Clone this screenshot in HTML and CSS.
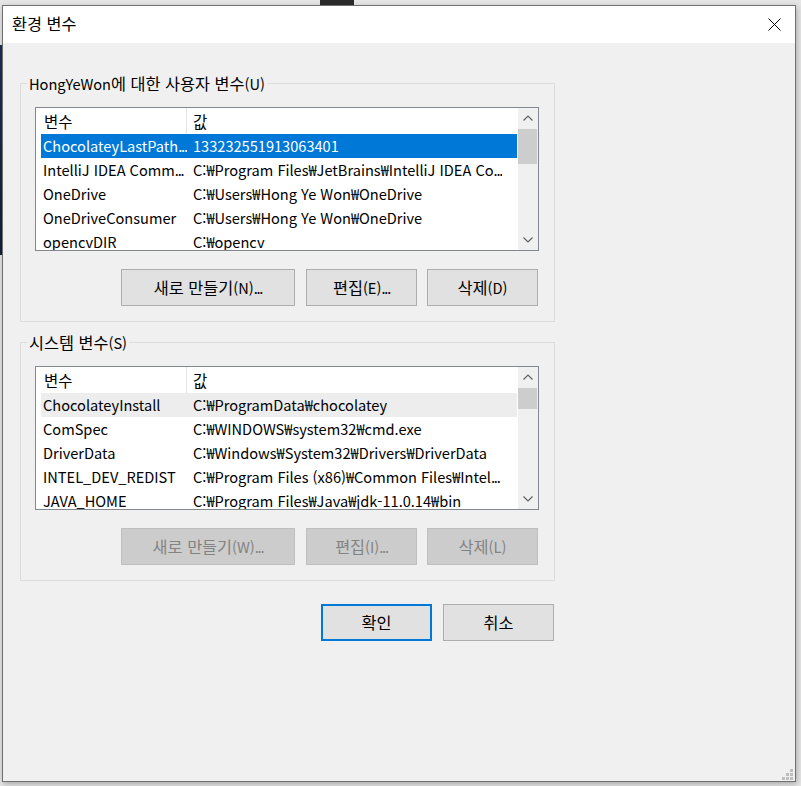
FILE: index.html
```html
<!DOCTYPE html>
<html lang="ko">
<head>
<meta charset="utf-8">
<title>환경 변수</title>
<link rel="stylesheet" href="styles.css">
</head>
<body>
<div class="desk-mark"></div>
<div class="window">
  <div class="titlebar">
    <span class="title"><span class="k">환경 변수</span></span>
    <svg class="close" width="13" height="13" viewBox="0 0 13 13"><path d="M0.5 0.5 L12.5 12.5 M12.5 0.5 L0.5 12.5" stroke="#000" stroke-width="1" fill="none"/></svg>
  </div>
  <div class="content">
    <fieldset class="group">
      <legend>HongYeWon<span class="k">에 대한 사용자 변수</span>(U)</legend>
      <div class="group-inner">
        <div class="list">
          <div class="list-body">
            <div class="header"><span class="hcol1"><span class="k">변수</span></span><span class="hcol2"><span class="k">값</span></span></div>
            <div class="row selected"><span class="col1">ChocolateyLastPath<span class="ell">...</span></span><span class="col2">133232551913063401</span></div>
            <div class="row"><span class="col1">IntelliJ IDEA Comm<span class="ell">...</span></span><span class="col2">C:₩Program Files₩JetBrains₩IntelliJ IDEA Co<span class="ell">...</span></span></div>
            <div class="row"><span class="col1">OneDrive</span><span class="col2">C:₩Users₩Hong Ye Won₩OneDrive</span></div>
            <div class="row"><span class="col1">OneDriveConsumer</span><span class="col2">C:₩Users₩Hong Ye Won₩OneDrive</span></div>
            <div class="row"><span class="col1">opencvDIR</span><span class="col2">C:₩opencv</span></div>
          </div>
          <div class="scrollbar">
            <div class="arrow"><svg width="10" height="6" viewBox="0 0 10 6"><polyline points="0.5,5.5 5,1 9.5,5.5" fill="none" stroke="#606060" stroke-width="1.2"/></svg></div>
            <div class="track"><div class="thumb thumb-user"></div></div>
            <div class="arrow"><svg width="10" height="6" viewBox="0 0 10 6"><polyline points="0.5,0.5 5,5 9.5,0.5" fill="none" stroke="#606060" stroke-width="1.2"/></svg></div>
          </div>
        </div>
        <div class="buttons">
          <button class="btn wide"><span class="k">새로 만들기</span>(N)<span class="ell">...</span></button>
          <button class="btn"><span class="k">편집</span>(E)<span class="ell">...</span></button>
          <button class="btn"><span class="k">삭제</span>(D)</button>
        </div>
      </div>
    </fieldset>

    <fieldset class="group system">
      <legend><span class="k">시스템 변수</span>(S)</legend>
      <div class="group-inner">
        <div class="list">
          <div class="list-body">
            <div class="header"><span class="hcol1"><span class="k">변수</span></span><span class="hcol2"><span class="k">값</span></span></div>
            <div class="row hover"><span class="col1">ChocolateyInstall</span><span class="col2">C:₩ProgramData₩chocolatey</span></div>
            <div class="row"><span class="col1">ComSpec</span><span class="col2">C:₩WINDOWS₩system32₩cmd.exe</span></div>
            <div class="row"><span class="col1">DriverData</span><span class="col2">C:₩Windows₩System32₩Drivers₩DriverData</span></div>
            <div class="row"><span class="col1">INTEL_DEV_REDIST</span><span class="col2">C:₩Program Files (x86)₩Common Files₩Intel<span class="ell">...</span></span></div>
            <div class="row"><span class="col1">JAVA_HOME</span><span class="col2">C:₩Program Files₩Java₩jdk-11.0.14₩bin</span></div>
          </div>
          <div class="scrollbar">
            <div class="arrow"><svg width="10" height="6" viewBox="0 0 10 6"><polyline points="0.5,5.5 5,1 9.5,5.5" fill="none" stroke="#606060" stroke-width="1.2"/></svg></div>
            <div class="track"><div class="thumb thumb-system"></div></div>
            <div class="arrow"><svg width="10" height="6" viewBox="0 0 10 6"><polyline points="0.5,0.5 5,5 9.5,0.5" fill="none" stroke="#606060" stroke-width="1.2"/></svg></div>
          </div>
        </div>
        <div class="buttons">
          <button class="btn wide" disabled><span class="k">새로 만들기</span>(W)<span class="ell">...</span></button>
          <button class="btn" disabled><span class="k">편집</span>(I)<span class="ell">...</span></button>
          <button class="btn" disabled><span class="k">삭제</span>(L)</button>
        </div>
      </div>
    </fieldset>

    <div class="dialog-buttons">
      <button class="btn default"><span class="k">확인</span></button>
      <button class="btn"><span class="k">취소</span></button>
    </div>
  </div>
  <div class="grip">
    <span class="g1"></span>
    <span class="g2"></span><span class="g3"></span>
    <span class="g4"></span><span class="g5"></span><span class="g6"></span>
  </div>
</div>
</body>
</html>
```

FILE: styles.css
```css
html, body {
  margin: 0;
  padding: 0;
}

body {
  width: 801px;
  height: 786px;
  overflow: hidden;
  position: relative;
  background:
    linear-gradient(#1d2f52, #12203c) 0 45px / 2px 210px no-repeat,
    #e6e6e6;
  font-family: "Noto Sans CJK KR", "Noto Sans", sans-serif;
  font-size: 14.6px;
  color: #000;
}

.k {
  font-size: 16.3px;
}

.ell {
  letter-spacing: -1.2px;
}

.desk-mark {
  position: absolute;
  left: 320px;
  top: 0;
  width: 34px;
  height: 5px;
  background: #2b2b2b;
}

.window {
  position: relative;
  box-sizing: border-box;
  margin: 5px 0 0 2px;
  width: 794px;
  height: 777px;
  border: 1px solid #6f6f6f;
  background: #f0f0f0;
  box-shadow: 1px 2px 6px rgba(0, 0, 0, 0.28);
}

.titlebar {
  height: 37px;
  background: #fff;
  display: flex;
  align-items: center;
  justify-content: space-between;
  padding: 0 14px 2px 9px;
  box-sizing: border-box;
}

.title {
  line-height: 20px;
}

.close {
  display: block;
  margin-top: 2px;
}

.content {
  width: 535px;
  padding: 30px 0 0 17px;
}

.group {
  box-sizing: border-box;
  width: 535px;
  margin: 0;
  padding: 0;
  border: 1px solid #dcdcdc;
  min-width: 0;
}

.group.system {
  margin-top: 10px;
}

.group legend {
  margin-left: 6px;
  padding: 0 2px;
  height: 20px;
  line-height: 20px;
}

.group-inner {
  padding: 14px 15px 15px 14px;
}

.list {
  display: flex;
  box-sizing: border-box;
  height: 144px;
  border: 1px solid #828790;
  background: #fff;
  overflow: hidden;
}

.list-body {
  flex: 1;
  min-width: 0;
  overflow: hidden;
}

.header {
  display: flex;
  height: 26px;
  line-height: 26px;
}

.hcol1 {
  box-sizing: border-box;
  width: 151px;
  padding-left: 8px;
  border-right: 1px solid #e5e5e5;
}

.hcol2 {
  padding-left: 6px;
}

.header .k {
  font-size: 15.5px;
}

.row {
  display: flex;
  height: 24px;
  line-height: 24px;
  margin: 0 1px 0 5px;
  white-space: nowrap;
}

.row.selected {
  background: #0078d7;
  color: #fff;
}

.row.hover {
  background: #ededed;
}

.col1 {
  box-sizing: border-box;
  width: 146px;
  padding-left: 2px;
  overflow: hidden;
  flex: none;
}

.col2 {
  padding-left: 6px;
  overflow: hidden;
}

.scrollbar {
  width: 20px;
  flex: none;
  display: flex;
  flex-direction: column;
  background: #f0f0f0;
}

.arrow {
  height: 20px;
  display: flex;
  align-items: center;
  justify-content: center;
  flex: none;
}

.arrow svg {
  display: block;
}

.track {
  flex: 1;
  padding: 1px 1px 0 0;
}

.thumb {
  background: #cdcdcd;
}

.thumb-user {
  height: 35px;
}

.thumb-system {
  height: 21px;
}

.buttons {
  display: flex;
  justify-content: flex-end;
  gap: 10px;
  margin-top: 18px;
  padding-right: 1px;
}

.btn {
  box-sizing: border-box;
  width: 111px;
  height: 37px;
  padding: 0;
  margin: 0;
  border: 1px solid #adadad;
  background: #e1e1e1;
  font-family: inherit;
  font-size: 14.6px;
  line-height: 20px;
  color: #000;
}

.btn.wide {
  width: 174px;
  margin-right: 1px;
}

.btn:disabled {
  background: #cccccc;
  border-color: #bfbfbf;
  color: #838383;
}

.btn.default {
  border: 2px solid #0078d7;
}

.dialog-buttons {
  display: flex;
  justify-content: flex-end;
  gap: 11px;
  margin-top: 23px;
  padding-right: 1px;
}

.grip {
  position: absolute;
  right: 2px;
  bottom: 1px;
  display: grid;
  grid-template-columns: repeat(3, 3px);
  grid-template-rows: repeat(3, 3px);
  gap: 1px;
}

.grip span {
  background: #bdbdbd;
}

.g1 { grid-area: 1 / 3; }
.g2 { grid-area: 2 / 2; }
.g3 { grid-area: 2 / 3; }
.g4 { grid-area: 3 / 1; }
.g5 { grid-area: 3 / 2; }
.g6 { grid-area: 3 / 3; }
```
